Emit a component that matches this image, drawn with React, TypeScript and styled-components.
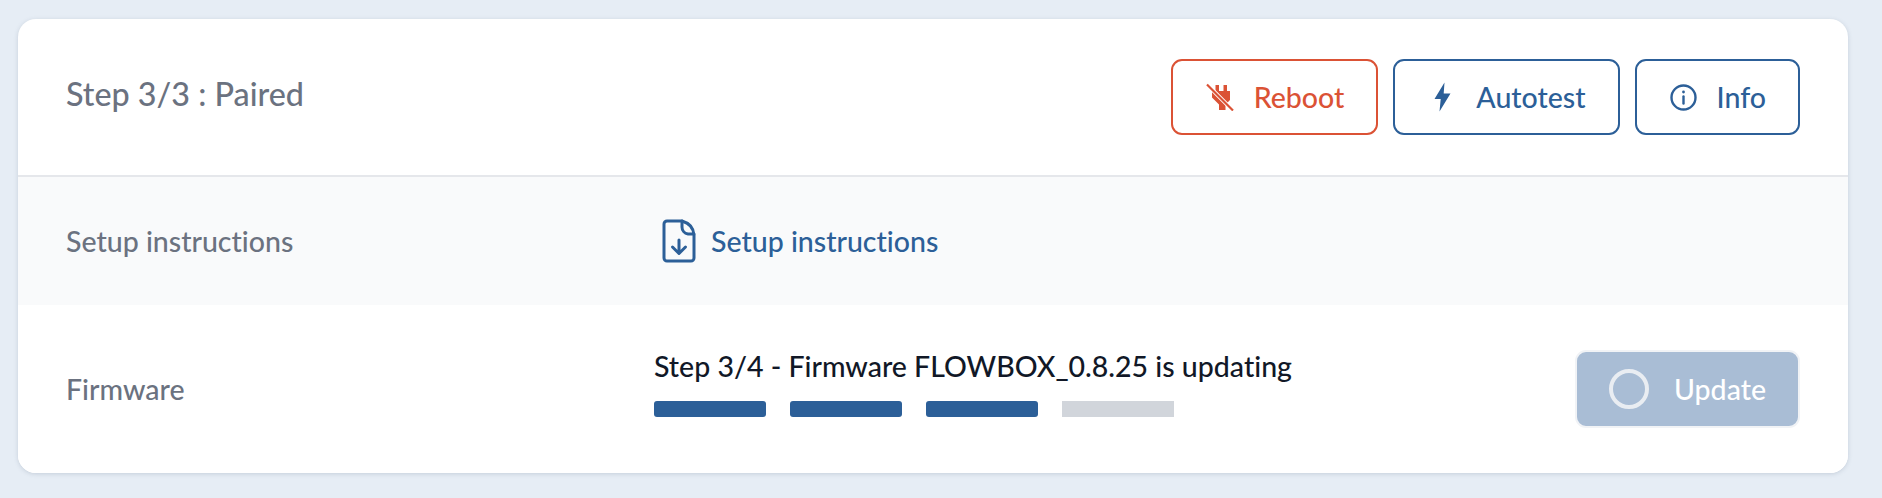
import React from 'react'
import styled, { createGlobalStyle } from 'styled-components'

const blue = '#2c5f98'
const red = '#db5235'
const grey = '#6b7280'

const GlobalStyle = createGlobalStyle`
  html, body {
    margin: 0;
    background: #e6edf5;
    font-family: 'Lato', 'Open Sans', sans-serif;
    font-variant-ligatures: none;
  }
`

const Page = styled.div`
  padding: 19px 34px 25px 18px;
`

const Card = styled.section`
  height: 454px;
  background: #fff;
  border-radius: 18px;
  box-shadow: 0 1px 4px rgba(100, 116, 139, 0.25);
  overflow: hidden;
  display: flex;
  flex-direction: column;
`

const Header = styled.header`
  height: 158px;
  box-sizing: border-box;
  border-bottom: 2px solid #e5e7eb;
  padding: 0 48px;
  display: flex;
  align-items: center;
  justify-content: space-between;
`

const Title = styled.h2`
  margin: 0 0 7px;
  font-size: 32.3px;
  font-weight: 500;
  color: ${grey};
`

const Actions = styled.div`
  display: flex;
  gap: 15px;
`

const Button = styled.button<{ $tone?: 'red' | 'blue'; $tight?: boolean }>`
  height: 76px;
  box-sizing: border-box;
  padding: 0 32px 0 ${(p) => (p.$tight ? '34px' : '35px')};
  display: flex;
  align-items: center;
  gap: 21px;
  border-radius: 11px;
  background: #fff;
  font: 500 28.5px 'Lato', sans-serif;
  font-variant-ligatures: none;
  border: 2px solid ${(p) => (p.$tone === 'red' ? red : blue)};
  color: ${(p) => (p.$tone === 'red' ? red : blue)};
`

const UpdateButton = styled(Button)`
  height: 78px;
  padding: 0 32px;
  gap: 25px;
  background: #a9bdd5;
  border: 2px solid #f1f3f6;
  color: #fff;
`

const IconBox = styled.span`
  width: 25px;
  height: 30px;
  display: flex;
  align-items: center;
  justify-content: center;

  svg {
    flex-shrink: 0;
  }
`

const Spinner = styled.span`
  width: 40px;
  height: 40px;
  box-sizing: border-box;
  border-radius: 50%;
  border: 4px solid #e9edf2;
`

const Row = styled.div<{ $shaded?: boolean; $grow?: boolean }>`
  display: grid;
  grid-template-columns: 588px 1fr auto;
  align-items: center;
  padding: 0 48px;
  height: ${(p) => (p.$grow ? '168px' : '128px')};
  background: ${(p) => (p.$shaded ? '#f9fafb' : '#fff')};
`

const Label = styled.div`
  font-size: 28.5px;
  font-weight: 500;
  color: ${grey};
`

const DocLink = styled.a`
  display: flex;
  align-items: center;
  gap: 15px;
  margin-left: 8px;
  font-size: 28.5px;
  font-weight: 500;
  color: ${blue};
`

const Status = styled.div`
  display: flex;
  flex-direction: column;
  gap: 19px;
  margin-bottom: 12px;
`

const StatusText = styled.div`
  font-size: 28.5px;
  font-weight: 500;
  line-height: 32px;
  color: #111827;
`

const Steps = styled.div`
  display: flex;
  gap: 24px;
`

const Step = styled.span<{ $done?: boolean }>`
  width: 112px;
  height: 16px;
  border-radius: ${(p) => (p.$done ? '3px' : '0')};
  background: ${(p) => (p.$done ? blue : '#d1d5db')};
`

const PlugOffIcon = () => (
  <svg width="28" height="28" viewBox="0 0 28 28">
    <path
      fill={red}
      d="M9.500 2h3.500v6h4.500V2H21v6h3v9l-4.500 4.500V27H13v-5.500L6 14.500V8h3.500z"
    />
    <path d="M1 1.500 27 27.500" stroke="#fff" strokeWidth="4" />
    <path d="M1 1.500 27 27.500" stroke={red} strokeWidth="2.200" />
  </svg>
)

const BoltIcon = () => (
  <svg width="17" height="30" viewBox="0 0 17 30">
    <path fill={blue} d="M10.500 0.500 0.500 17h6.200L5.500 29.500 16.500 11.500H9.700z" />
  </svg>
)

const InfoIcon = () => (
  <svg width="27" height="27" viewBox="0 0 27 27" fill="none" stroke={blue} strokeWidth="2.400">
    <circle cx="13.500" cy="13.500" r="12" />
    <path d="M13.500 12.500v7" strokeLinecap="round" />
    <circle cx="13.500" cy="8" r="1.400" fill={blue} stroke="none" />
  </svg>
)

const DocDownIcon = () => (
  <svg width="34" height="44" viewBox="0 0 34 44" fill="none" stroke={blue} strokeWidth="3" strokeLinecap="round" strokeLinejoin="round">
    <path d="M5 2h15c7 2 11.500 7 12 14v23a3 3 0 0 1-3 3H5a3 3 0 0 1-3-3V5a3 3 0 0 1 3-3z" />
    <path d="M20 2v6a7 7 0 0 0 6 7h6" />
    <path d="M17 21v13M10.500 28l6.500 6.500 6.500-6.500" />
  </svg>
)

const App: React.FC = (): JSX.Element => (
  <Page>
    <GlobalStyle />
    <Card>
      <Header>
        <Title>Step 3/3 : Paired</Title>
        <Actions>
          <Button $tone="red">
            <IconBox>
              <PlugOffIcon />
            </IconBox>
            Reboot
          </Button>
          <Button>
            <IconBox>
              <BoltIcon />
            </IconBox>
            Autotest
          </Button>
          <Button $tight>
            <IconBox>
              <InfoIcon />
            </IconBox>
            Info
          </Button>
        </Actions>
      </Header>
      <Row $shaded>
        <Label>Setup instructions</Label>
        <DocLink>
          <DocDownIcon />
          Setup instructions
        </DocLink>
      </Row>
      <Row $grow>
        <Label>Firmware</Label>
        <Status>
          <StatusText>Step 3/4 - Firmware FLOWBOX_0.8.25 is updating</StatusText>
          <Steps>
            <Step $done />
            <Step $done />
            <Step $done />
            <Step />
          </Steps>
        </Status>
        <UpdateButton>
          <Spinner />
          Update
        </UpdateButton>
      </Row>
    </Card>
  </Page>
)

export default App
